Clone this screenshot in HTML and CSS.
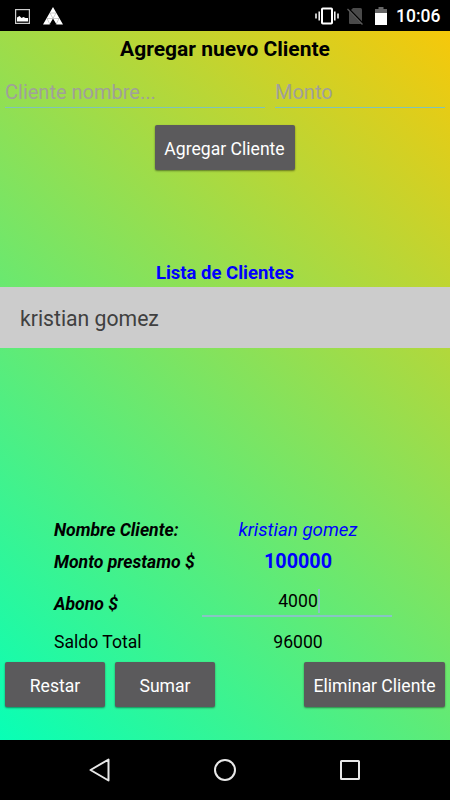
FILE: index.html
```html
<!DOCTYPE html>
<html lang="es">
<head>
  <meta charset="utf-8">
  <title>Clientes</title>
  <link rel="stylesheet" href="styles.css">
</head>
<body>
  <!-- Status bar -->
  <header class="status-bar">
    <svg class="icon-image" width="15" height="15" viewBox="0 0 15 15">
      <rect x="0.6" y="0.6" width="13.8" height="13.8" fill="none" stroke="#ccc" stroke-width="1.2"/>
      <path d="M2 12.500V8.500L4.500 7L6.500 9L8.500 8L10.500 9L13 9V12.500Z" fill="#fff"/>
    </svg>
    <svg class="icon-app" width="20" height="18" viewBox="0 0 20 18">
      <path d="M10 0L20 17.500H13.500L10 11.500L6.500 17.500H0Z" fill="#fff"/>
      <path d="M7 6H13M4 11.500H16M7 6L10 11.500M13 6L10 11.500M4 11.500L7 17.500M16 11.500L13 17.500" fill="none" stroke="#999" stroke-width="0.5"/>
    </svg>
    <svg class="icon-vibrate" width="24" height="18" viewBox="0 0 24 18">
      <rect x="7" y="1.500" width="10" height="15" rx="0.8" fill="none" stroke="#fff" stroke-width="2"/>
      <path d="M4.200 4.500V13.500M19.800 4.500V13.500M1 6.500V11.500M23 6.500V11.500" stroke="#fff" stroke-width="1.500"/>
    </svg>
    <svg class="icon-sim" width="17" height="18" viewBox="0 0 17 18">
      <path d="M6 1H13.500Q15 1 15 2.500V17H3Q2 17 2 16V5Z" fill="#4a4a4a"/>
      <path d="M1 1.500L16 17" stroke="#000" stroke-width="2.500"/>
      <path d="M0.500 2L15.500 17.500" stroke="#5c5c5c" stroke-width="1.300"/>
    </svg>
    <svg class="icon-battery" width="12" height="18" viewBox="0 0 12 18">
      <path d="M3.500 0H8.500V2H12V6H0V2H3.500Z" fill="#666"/>
      <rect x="0" y="6" width="12" height="12" fill="#fff"/>
    </svg>
    <span class="clock">10:06</span>
  </header>

  <main>
    <!-- New client -->
    <h1>Agregar nuevo Cliente</h1>
    <form class="new-client">
      <input class="field name" type="text" placeholder="Cliente nombre...">
      <input class="field amount" type="text" placeholder="Monto">
    </form>
    <button class="btn add">Agregar Cliente</button>

    <!-- Client list -->
    <h2>Lista de Clientes</h2>
    <ul class="client-list">
      <li>kristian gomez</li>
    </ul>

    <!-- Selected client -->
    <dl class="detail">
      <div class="row row-name">
        <dt>Nombre Cliente:</dt>
        <dd>kristian gomez</dd>
      </div>
      <div class="row row-loan">
        <dt>Monto prestamo $</dt>
        <dd>100000</dd>
      </div>
      <div class="row row-payment">
        <dt>Abono $</dt>
        <dd><span class="caret">4000</span></dd>
      </div>
      <div class="row row-total">
        <dt>Saldo Total</dt>
        <dd>96000</dd>
      </div>
    </dl>

    <div class="actions">
      <button class="btn small">Restar</button>
      <button class="btn small">Sumar</button>
      <button class="btn delete">Eliminar Cliente</button>
    </div>
  </main>

  <!-- Navigation bar -->
  <nav class="nav-bar">
    <svg width="24" height="26" viewBox="0 0 24 26">
      <path d="M20.500 2.500V23.500L2.500 13Z" fill="none" stroke="#e8e8e8" stroke-width="2" stroke-linejoin="round"/>
    </svg>
    <svg width="24" height="24" viewBox="0 0 24 24">
      <circle cx="12" cy="12" r="10" fill="none" stroke="#e8e8e8" stroke-width="2"/>
    </svg>
    <svg width="24" height="24" viewBox="0 0 24 24">
      <rect x="3" y="3" width="18" height="18" rx="0.5" fill="none" stroke="#e8e8e8" stroke-width="2"/>
    </svg>
  </nav>
</body>
</html>
```
FILE: styles.css
```css
body {
  display: flex;
  flex-direction: column;
  height: 800px;
  margin: 0;
  overflow: hidden;
  background-color: #000;
  color: #000;
  font-family: Roboto, sans-serif;
}

/* Status bar */
.status-bar {
  display: flex;
  align-items: center;
  box-sizing: border-box;
  height: 31px;
  padding: 1px 10px 0 15px;
  color: #fff;
}

.icon-app {
  margin-left: 13px;
}

.icon-vibrate {
  margin-left: auto;
}

.icon-sim {
  margin-left: 8px;
}

.icon-battery {
  margin-left: 11px;
}

.clock {
  width: 44px;
  margin-left: 9px;
  font-size: 17.5px;
  font-weight: 500;
  line-height: 22px;
  white-space: nowrap;
}

/* Content */
main {
  display: flex;
  flex-direction: column;
  align-items: center;
  height: 709px;
  background: linear-gradient(42deg, #08ffb6, #f6c80a);
}

h1 {
  margin: 5px 0 0;
  font-size: 21px;
  font-weight: 700;
  line-height: 26px;
}

.new-client {
  display: flex;
  align-self: stretch;
  gap: 10px;
  margin: 14px 5px 0;
}

.field {
  box-sizing: border-box;
  height: 32px;
  min-width: 0;
  padding: 1px 0 0;
  border: none;
  border-bottom: 1px solid #80c4b8;
  background: transparent;
  font-family: inherit;
  font-size: 20px;
}

.field::placeholder {
  color: #a0a09a;
}

.name {
  width: 260px;
}

.amount {
  width: 170px;
}

.btn {
  height: 45px;
  padding: 2px 0 0;
  border: none;
  border-radius: 2px;
  background-color: #5b5a5c;
  box-shadow: 0 1px 2px rgba(0, 0, 0, 0.45);
  color: #fff;
  font-family: inherit;
  font-size: 17.6px;
}

.add {
  width: 140px;
  margin: 17px 1px 0 0;
}

/* Client list */
h2 {
  margin: 92px 0 0;
  color: #00f;
  font-size: 18.5px;
  font-weight: 700;
  line-height: 22px;
}

.client-list {
  align-self: stretch;
  margin: 3px 0 0;
  padding: 0;
  list-style: none;
}

.client-list li {
  height: 61px;
  padding-left: 20px;
  background-color: #ccc;
  color: #404040;
  font-size: 21.2px;
  line-height: 63px;
}

/* Selected client */
.detail {
  width: 338px;
  margin: auto 4px 0 0;
  font-size: 17.6px;
}

.row {
  display: flex;
}

dt {
  width: 148px;
  white-space: nowrap;
  font-style: italic;
  font-weight: 700;
}

dd {
  box-sizing: border-box;
  width: 190px;
  margin: 0;
  padding-left: 2px;
  text-align: center;
}

.row-name,
.row-loan {
  line-height: 32px;
}

.row-name dd {
  color: #00f;
  font-size: 18.7px;
  font-style: italic;
}

.row-loan dd {
  color: #00f;
  font-size: 19.8px;
  font-weight: 700;
}

.row-payment {
  height: 39px;
  line-height: 52px;
}

.row-payment dd {
  border-bottom: 2px solid #88c4c4;
  line-height: 47px;
}

.caret {
  margin-right: -2px;
  padding: 2px 0;
  border-right: 2px solid #88c4c4;
}

.row-total {
  padding-top: 14px;
  line-height: 22px;
}

.row-total dt {
  font-style: normal;
  font-weight: 400;
}

.actions {
  display: flex;
  align-self: stretch;
  gap: 10px;
  margin: 9px 5px 33px;
}

.small {
  width: 100px;
}

.delete {
  width: 141px;
  margin-left: auto;
}

/* Navigation bar */
.nav-bar {
  display: flex;
  align-items: center;
  justify-content: center;
  gap: 101px;
  height: 60px;
}
```
